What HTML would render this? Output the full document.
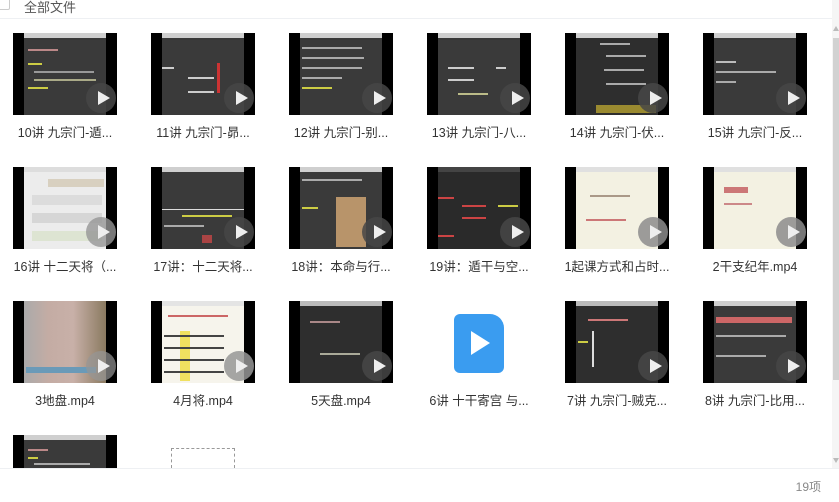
<!DOCTYPE html>
<html style="overflow:hidden;height:502px"><head><meta charset="utf-8"><style>
*{margin:0;padding:0;box-sizing:border-box}
body{width:839px;height:502px;background:#fff;position:relative;overflow:hidden;font-family:"Liberation Sans","Noto Sans CJK SC",sans-serif}
.hdr{position:absolute;left:0;top:0;width:832px;height:19px;border-bottom:1px solid #eef0f3}
.cb{position:absolute;left:-4px;top:-4px;width:14px;height:14px;border:1px solid #ccc;border-radius:2px}
.ht{position:absolute;left:24px;top:-3px;font-size:13px;color:#555}
.t{position:absolute;width:104px;height:82px;background:#000;overflow:hidden}
.in{position:absolute;left:11px;top:0;width:82px;height:82px;background:#3a3a3a}
.bar{position:absolute;left:0;top:0;width:82px;height:5px;background:#cfcfcf}
.ln{position:absolute;height:2px}
.pl{position:absolute;left:73px;top:50px;width:30px;height:30px;border-radius:50%;background:rgba(70,70,70,.85)}
.pl:after{content:"";position:absolute;left:12px;top:8px;border-left:12px solid #eee;border-top:7px solid transparent;border-bottom:7px solid transparent}
.lb{position:absolute;width:138px;text-align:center;font-size:12.5px;color:#333;white-space:nowrap}
.sb{position:absolute;left:832px;top:0;width:7px;height:469px;background:#f5f5f5}
.th{position:absolute;left:833px;top:38px;width:6px;height:342px;background:#d2d2d2}
.ft{position:absolute;left:0;top:468px;width:839px;height:34px;background:#fff;border-top:1px solid #eef0f3}
.cnt{position:absolute;right:18px;top:9px;font-size:12px;color:#888}
</style></head><body>
<div class="hdr"><div class="cb"></div><div class="ht">全部文件</div></div>

<!-- row1 -->
<div class="t" style="left:13px;top:33px"><div class="in"><div class="bar"></div><div class="ln" style="left:4px;top:16px;width:30px;background:#b88"></div><div class="ln" style="left:4px;top:30px;width:14px;background:#cc4"></div><div class="ln" style="left:10px;top:38px;width:60px;background:#999"></div><div class="ln" style="left:10px;top:46px;width:62px;background:#aa8"></div><div class="ln" style="left:4px;top:54px;width:20px;background:#cc4"></div></div><div class="pl"></div></div>
<div class="t" style="left:151px;top:33px"><div class="in"><div class="bar"></div><div class="ln" style="left:0;top:34px;width:12px;background:#ccc"></div><div class="ln" style="left:26px;top:44px;width:26px;background:#ccc"></div><div class="ln" style="left:26px;top:58px;width:26px;background:#ccc"></div><div class="ln" style="left:55px;top:30px;width:3px;height:30px;background:#c33"></div></div><div class="pl"></div></div>
<div class="t" style="left:289px;top:33px"><div class="in"><div class="bar"></div><div class="ln" style="left:2px;top:14px;width:60px;background:#aaa"></div><div class="ln" style="left:2px;top:24px;width:62px;background:#aaa"></div><div class="ln" style="left:2px;top:34px;width:60px;background:#aaa"></div><div class="ln" style="left:2px;top:44px;width:40px;background:#aaa"></div><div class="ln" style="left:2px;top:54px;width:30px;background:#cc4"></div></div><div class="pl"></div></div>
<div class="t" style="left:427px;top:33px"><div class="in"><div class="bar"></div><div class="ln" style="left:10px;top:34px;width:26px;background:#ccc"></div><div class="ln" style="left:10px;top:46px;width:26px;background:#ccc"></div><div class="ln" style="left:58px;top:34px;width:10px;background:#ccc"></div><div class="ln" style="left:20px;top:60px;width:30px;background:#bb8"></div></div><div class="pl"></div></div>
<div class="t" style="left:565px;top:33px"><div class="in" style="background:#2e2e2e"><div class="bar"></div><div class="ln" style="left:24px;top:10px;width:30px;background:#aaa"></div><div class="ln" style="left:30px;top:22px;width:40px;background:#aaa"></div><div class="ln" style="left:28px;top:36px;width:40px;background:#aaa"></div><div class="ln" style="left:30px;top:50px;width:40px;background:#aaa"></div><div class="ln" style="left:20px;top:72px;width:60px;height:8px;background:#9a8a30"></div></div><div class="pl"></div></div>
<div class="t" style="left:703px;top:33px"><div class="in"><div class="bar"></div><div class="ln" style="left:2px;top:28px;width:20px;background:#bbb"></div><div class="ln" style="left:2px;top:38px;width:60px;background:#aaa"></div><div class="ln" style="left:2px;top:48px;width:20px;background:#aaa"></div></div><div class="pl"></div></div>
<div class="lb" style="left:-4px;top:122px">10讲 九宗门-遁...</div>
<div class="lb" style="left:134px;top:122px">11讲 九宗门-昴...</div>
<div class="lb" style="left:272px;top:122px">12讲 九宗门-别...</div>
<div class="lb" style="left:410px;top:122px">13讲 九宗门-八...</div>
<div class="lb" style="left:548px;top:122px">14讲 九宗门-伏...</div>
<div class="lb" style="left:686px;top:122px">15讲 九宗门-反...</div>

<!-- row2 -->
<div class="t" style="left:13px;top:167px"><div class="in" style="background:#ececec"><div class="bar" style="background:#ddd"></div><div class="ln" style="left:24px;top:12px;width:56px;height:8px;background:#d8d0c0"></div><div class="ln" style="left:8px;top:28px;width:70px;height:10px;background:#dcdcdc"></div><div class="ln" style="left:8px;top:46px;width:70px;height:10px;background:#d6d6d6"></div><div class="ln" style="left:8px;top:64px;width:70px;height:10px;background:#dde4d2"></div></div><div class="pl" style="background:rgba(150,150,150,.8)"></div></div>
<div class="t" style="left:151px;top:167px"><div class="in"><div class="bar"></div><div class="ln" style="left:0;top:42px;width:82px;height:1px;background:#ddd"></div><div class="ln" style="left:20px;top:48px;width:50px;background:#cc4"></div><div class="ln" style="left:2px;top:58px;width:40px;background:#aaa"></div><div class="ln" style="left:40px;top:68px;width:10px;height:8px;background:#a44"></div></div><div class="pl"></div></div>
<div class="t" style="left:289px;top:167px"><div class="in"><div class="bar"></div><div class="ln" style="left:36px;top:30px;width:30px;height:50px;background:#b8946a"></div><div class="ln" style="left:2px;top:12px;width:60px;background:#aaa"></div><div class="ln" style="left:2px;top:40px;width:16px;background:#cc4"></div></div><div class="pl"></div></div>
<div class="t" style="left:427px;top:167px"><div class="in" style="background:#2a2a2a"><div class="bar" style="background:#444"></div><div class="ln" style="left:0;top:30px;width:16px;background:#c44"></div><div class="ln" style="left:24px;top:38px;width:24px;background:#c44"></div><div class="ln" style="left:24px;top:50px;width:24px;background:#c44"></div><div class="ln" style="left:0;top:68px;width:16px;background:#c44"></div><div class="ln" style="left:60px;top:38px;width:20px;background:#cc4"></div></div><div class="pl"></div></div>
<div class="t" style="left:565px;top:167px"><div class="in" style="background:#f3f1e2"><div class="bar" style="background:#e0e0e0"></div><div class="ln" style="left:14px;top:28px;width:40px;background:#a98"></div><div class="ln" style="left:10px;top:52px;width:40px;background:#c77"></div></div><div class="pl" style="background:rgba(140,140,140,.85)"></div></div>
<div class="t" style="left:703px;top:167px"><div class="in" style="background:#f3f1e2"><div class="bar" style="background:#e0e0e0"></div><div class="ln" style="left:10px;top:20px;width:24px;height:6px;background:#c77"></div><div class="ln" style="left:10px;top:36px;width:28px;background:#c88"></div></div><div class="pl" style="background:rgba(140,140,140,.85)"></div></div>
<div class="lb" style="left:-4px;top:256px">16讲 十二天将（...</div>
<div class="lb" style="left:134px;top:256px">17讲：十二天将...</div>
<div class="lb" style="left:272px;top:256px">18讲：本命与行...</div>
<div class="lb" style="left:410px;top:256px">19讲：遁干与空...</div>
<div class="lb" style="left:548px;top:256px">1起课方式和占时...</div>
<div class="lb" style="left:686px;top:256px">2干支纪年.mp4</div>

<!-- row3 -->
<div class="t" style="left:13px;top:301px"><div class="in" style="background:linear-gradient(90deg,#aaa 0%,#c4aca4 30%,#c8b0a8 60%,#8a7a60 100%)"><div class="ln" style="left:2px;top:66px;width:70px;height:6px;background:#6a9ab8"></div></div><div class="pl" style="background:rgba(150,150,150,.7)"></div></div>
<div class="t" style="left:151px;top:301px"><div class="in" style="background:#f6f4ec"><div class="bar" style="background:#e4e4e4"></div><div class="ln" style="left:18px;top:30px;width:10px;height:50px;background:#f0e060"></div><div class="ln" style="left:2px;top:34px;width:60px;background:#444"></div><div class="ln" style="left:2px;top:46px;width:60px;background:#444"></div><div class="ln" style="left:2px;top:58px;width:60px;background:#444"></div><div class="ln" style="left:2px;top:70px;width:60px;background:#444"></div><div class="ln" style="left:6px;top:14px;width:60px;background:#c66"></div></div><div class="pl" style="background:rgba(150,150,150,.85)"></div></div>
<div class="t" style="left:289px;top:301px"><div class="in" style="background:#2e2e2e"><div class="bar" style="background:#bbb"></div><div class="ln" style="left:20px;top:52px;width:40px;background:#aa9"></div><div class="ln" style="left:10px;top:20px;width:30px;background:#a88"></div></div><div class="pl"></div></div>
<div style="position:absolute;left:454px;top:314px;width:50px;height:59px;background:#3a9cf0;border-radius:6px 14px 6px 6px"><div style="position:absolute;left:17px;top:17px;border-left:19px solid #fff;border-top:12px solid transparent;border-bottom:12px solid transparent"></div></div>
<div class="t" style="left:565px;top:301px"><div class="in" style="background:#2e2e2e"><div class="bar" style="background:#bbb"></div><div class="ln" style="left:12px;top:18px;width:40px;background:#c77"></div><div class="ln" style="left:16px;top:30px;width:2px;height:36px;background:#ddd"></div><div class="ln" style="left:2px;top:40px;width:10px;background:#cc4"></div></div><div class="pl"></div></div>
<div class="t" style="left:703px;top:301px"><div class="in"><div class="bar"></div><div class="ln" style="left:2px;top:16px;width:76px;height:6px;background:#c66"></div><div class="ln" style="left:2px;top:34px;width:70px;background:#aaa"></div><div class="ln" style="left:2px;top:54px;width:50px;background:#aaa"></div></div><div class="pl"></div></div>
<div class="lb" style="left:-4px;top:390px">3地盘.mp4</div>
<div class="lb" style="left:134px;top:390px">4月将.mp4</div>
<div class="lb" style="left:272px;top:390px">5天盘.mp4</div>
<div class="lb" style="left:410px;top:390px">6讲 十干寄宫 与...</div>
<div class="lb" style="left:548px;top:390px">7讲 九宗门-贼克...</div>
<div class="lb" style="left:686px;top:390px">8讲 九宗门-比用...</div>

<!-- row4 -->
<div class="t" style="left:13px;top:435px;height:33px"><div class="in"><div class="bar"></div><div class="ln" style="left:4px;top:14px;width:20px;background:#b88"></div><div class="ln" style="left:4px;top:22px;width:10px;background:#cc4"></div><div class="ln" style="left:10px;top:28px;width:56px;background:#aaa"></div></div></div>
<div style="position:absolute;left:171px;top:448px;width:64px;height:20px;border:1px dashed #999;border-bottom:none"></div>

<div class="sb"></div><div class="th"></div>
<div style="position:absolute;left:833px;top:26px;border-bottom:5px solid #bbb;border-left:3px solid transparent;border-right:3px solid transparent"></div>
<div class="ft"><div class="cnt">19项</div></div>
<div style="position:absolute;left:833px;top:458px;border-top:5px solid #bbb;border-left:3px solid transparent;border-right:3px solid transparent"></div>
</body></html>
